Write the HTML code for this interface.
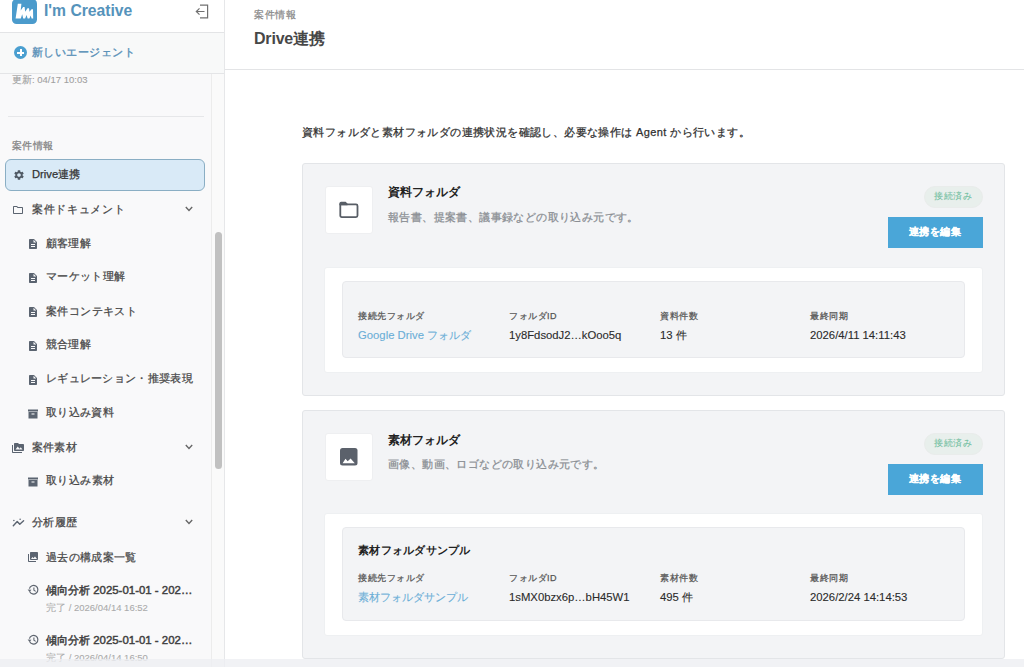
<!DOCTYPE html>
<html lang="ja">
<head>
<meta charset="utf-8">
<title>Drive連携</title>
<style>
*{box-sizing:border-box;margin:0;padding:0}
html,body{width:1024px;height:667px;overflow:hidden;background:#fff;font-family:"Liberation Sans",sans-serif;color:#333}
.ico{position:absolute;display:block}
.t{position:absolute;white-space:nowrap;line-height:1;-webkit-text-stroke:0.25px currentColor}
#side{position:absolute;left:0;top:0;width:225px;height:667px;background:#f9f9fa;border-right:1px solid #e6e7e9;overflow:hidden}
#shead{position:absolute;left:0;top:0;width:224px;height:33px;background:#fff;border-bottom:1px solid #e3e4e6}
#logo{position:absolute;left:12px;top:-1px;width:25px;height:25px;border-radius:4.5px;background:#4b9bcc;overflow:hidden}
#newag{position:absolute;left:0;top:33px;width:224px;height:41px;background:#f8f9f9;border-bottom:1px solid #e4e5e7}
#plus{position:absolute;left:14px;top:13px;width:13px;height:13px;border-radius:50%;background:#4a9fd0}
#plus:before{content:"";position:absolute;left:3px;top:5.5px;width:7px;height:2px;background:#fff}
#plus:after{content:"";position:absolute;left:5.5px;top:3px;width:2px;height:7px;background:#fff}
.div{position:absolute;left:8px;top:116px;width:196px;height:1px;background:#e6e7e9}
.active{position:absolute;left:5px;top:159px;width:200px;height:32px;border:1px solid #8aaec4;background:#d9eaf7;border-radius:6px}
.item{color:#474747;font-size:11px}
#track{position:absolute;left:211px;top:74px;width:13px;height:593px;background:#fafafa;border-left:1px solid #ececec}
#thumb{position:absolute;left:215px;top:232px;width:7px;height:237px;border-radius:4px;background:#c1c1c1}
#main{position:absolute;left:225px;top:0;width:799px;height:667px;background:#fff}
#mhead{position:absolute;left:0;top:0;width:799px;height:70px;border-bottom:1px solid #e3e4e6}
.card{position:absolute;left:302px;width:703px;background:#f3f4f6;border:1px solid #e3e5e8;border-radius:3px}
.ibox{position:absolute;left:22px;top:22px;width:48px;height:48px;background:#fff;border:1px solid #eeeff1;border-radius:3px}
.badge{position:absolute;left:621px;top:22px;width:59px;height:22px;border-radius:11px;background:#e8efec;border:1px solid #e9eceb}
.btn{position:absolute;left:585px;top:53px;width:95px;height:31px;background:#4aa6d8}
.panel{position:absolute;left:21px;width:659px;background:#fff;border:1px solid #eef0f2;border-radius:3px}
.gbox{position:absolute;left:17px;width:623px;background:#f3f4f6;border:1px solid #e8e9ec;border-radius:4px}
.lab{font-size:9px;letter-spacing:0.5px;color:#555}
.val{font-size:11.3px;color:#2a2a2a;-webkit-text-stroke:0.1px currentColor}
.link{color:#6aaed6}
#bottom{position:absolute;left:0;top:659px;width:1024px;height:8px;background:rgba(237,239,242,0.8)}
</style>
</head>
<body>
<div id="side">
<div id="shead">
<div id="logo"><svg width="25" height="25" viewBox="0 0 25 25"><path d="M3.6 19.5 L5.8 4.8 L9.4 4.8 L8.7 11.5 L11.1 8 L12.6 8 L13.2 12.8 L15.5 9.2 L17 9.2 L17.5 12.8 L19.5 10.2 L21 10.2 L21.2 19.5 L19.6 19.5 L18.7 16.5 L17.4 19.5 L15.6 19.5 L14.6 16 L13.1 19.5 L11.2 19.5 L10.2 15.2 L8.8 19.5 Z" fill="#fff"/></svg></div>
<div class="t " style="left:44px;top:3px;font-size:15.7px;font-weight:bold;color:#5593bb;-webkit-text-stroke:0">I'm Creative</div>
<svg class="ico" style="left:195px;top:4px" width="14" height="15" viewBox="0 0 14 15"><path d="M5 1.2 H12.6 V13.8 H5" fill="none" stroke="#707070" stroke-width="1.2"/><path d="M9.5 7.5 H1.5 M4.5 4.3 L1.3 7.5 L4.5 10.7" fill="none" stroke="#707070" stroke-width="1.2"/></svg>
</div>
<div id="newag"><div id="plus"></div></div>
<div class="t " style="left:32px;top:46.5px;font-size:11px;letter-spacing:0.45px;color:#5890b8;-webkit-text-stroke:0.35px currentColor">新しいエージェント</div>
<div class="t " style="left:12px;top:75px;font-size:9.5px;color:#a0a0a0;-webkit-text-stroke:0.1px currentColor">更新: 04/17 10:03</div>
<div class="div"></div>
<div class="t " style="left:12px;top:141px;font-size:10px;letter-spacing:0.3px;color:#838383">案件情報</div>
<div class="active"></div>
<svg class="ico" style="left:13px;top:169px" width="12" height="12" viewBox="0 0 24 24"><path fill="#4f5964" d="M19.14 12.94c.04-.3.06-.61.06-.94 0-.32-.02-.64-.07-.94l2.03-1.58c.18-.14.23-.41.12-.61l-1.92-3.32c-.12-.22-.37-.29-.59-.22l-2.39.96c-.5-.38-1.03-.7-1.62-.94l-.36-2.54c-.04-.24-.24-.41-.48-.41h-3.84c-.24 0-.43.17-.47.41l-.36 2.54c-.59.24-1.13.57-1.62.94l-2.39-.96c-.22-.08-.47 0-.59.22L2.74 8.87c-.12.21-.08.47.12.61l2.03 1.58c-.05.3-.09.63-.09.94s.02.64.07.94l-2.03 1.58c-.18.14-.23.41-.12.61l1.92 3.32c.12.22.37.29.59.22l2.39-.96c.5.38 1.03.7 1.62.94l.36 2.54c.05.24.24.41.48.41h3.84c.24 0 .44-.17.47-.41l.36-2.54c.59-.24 1.13-.56 1.62-.94l2.39.96c.22.08.47 0 .59-.22l1.92-3.32c.12-.22.07-.47-.12-.61l-2.01-1.58zM12 15.6c-1.98 0-3.6-1.62-3.6-3.6s1.62-3.6 3.6-3.6 3.6 1.62 3.6 3.6-1.62 3.6-3.6 3.6z"/></svg>
<div class="t " style="left:32px;top:169px;font-size:11.2px;color:#333">Drive連携</div>
<svg class="ico" style="left:12px;top:204px" width="12" height="12" viewBox="0 0 24 24"><path fill="#5b6470" d="M9.17 6l2 2H20v10H4V6h5.17M10 4H4c-1.1 0-1.99.9-1.99 2L2 18c0 1.1.9 2 2 2h16c1.1 0 2-.9 2-2V8c0-1.1-.9-2-2-2h-8l-2-2z"/></svg>
<div class="t item" style="left:32px;top:204px;letter-spacing:0.65px">案件ドキュメント</div>
<svg class="ico" style="left:185px;top:206px" width="8" height="6" viewBox="0 0 8 6"><path d="M0.8 1 L4 4.4 L7.2 1" fill="none" stroke="#666" stroke-width="1.4"/></svg>
<svg class="ico" style="left:27px;top:238px" width="12" height="12" viewBox="0 0 24 24"><path fill="#5b6470" d="M14 2H6c-1.1 0-1.99.9-1.99 2L4 20c0 1.1.89 2 1.99 2H18c1.1 0 2-.9 2-2V8l-6-6zm2 16H8v-2h8v2zm0-4H8v-2h8v2zm-3-5V3.5L18.5 9H13z"/></svg>
<div class="t item" style="left:46px;top:238px;letter-spacing:0.2px">顧客理解</div>
<svg class="ico" style="left:27px;top:272px" width="12" height="12" viewBox="0 0 24 24"><path fill="#5b6470" d="M14 2H6c-1.1 0-1.99.9-1.99 2L4 20c0 1.1.89 2 1.99 2H18c1.1 0 2-.9 2-2V8l-6-6zm2 16H8v-2h8v2zm0-4H8v-2h8v2zm-3-5V3.5L18.5 9H13z"/></svg>
<div class="t item" style="left:46px;top:271px;letter-spacing:0.35px">マーケット理解</div>
<svg class="ico" style="left:27px;top:306px" width="12" height="12" viewBox="0 0 24 24"><path fill="#5b6470" d="M14 2H6c-1.1 0-1.99.9-1.99 2L4 20c0 1.1.89 2 1.99 2H18c1.1 0 2-.9 2-2V8l-6-6zm2 16H8v-2h8v2zm0-4H8v-2h8v2zm-3-5V3.5L18.5 9H13z"/></svg>
<div class="t item" style="left:46px;top:306px;letter-spacing:0.4px">案件コンテキスト</div>
<svg class="ico" style="left:27px;top:340px" width="12" height="12" viewBox="0 0 24 24"><path fill="#5b6470" d="M14 2H6c-1.1 0-1.99.9-1.99 2L4 20c0 1.1.89 2 1.99 2H18c1.1 0 2-.9 2-2V8l-6-6zm2 16H8v-2h8v2zm0-4H8v-2h8v2zm-3-5V3.5L18.5 9H13z"/></svg>
<div class="t item" style="left:46px;top:339px;letter-spacing:0.2px">競合理解</div>
<svg class="ico" style="left:27px;top:374px" width="12" height="12" viewBox="0 0 24 24"><path fill="#5b6470" d="M14 2H6c-1.1 0-1.99.9-1.99 2L4 20c0 1.1.89 2 1.99 2H18c1.1 0 2-.9 2-2V8l-6-6zm2 16H8v-2h8v2zm0-4H8v-2h8v2zm-3-5V3.5L18.5 9H13z"/></svg>
<div class="t item" style="left:46px;top:373px;letter-spacing:0.3px">レギュレーション・推奨表現</div>
<svg class="ico" style="left:27px;top:408px" width="12" height="12" viewBox="0 0 24 24"><path fill="#5b6470" d="M2 3h20v4H2z M3 8h18v13H3z"/><path fill="#fff" d="M9 11h6v2H9z"/></svg>
<div class="t item" style="left:46px;top:407px;letter-spacing:0.35px">取り込み資料</div>
<svg class="ico" style="left:12px;top:442px" width="12" height="12" viewBox="0 0 24 24"><path fill="#5b6470" d="M2 6H0v5h.01L0 20c0 1.1.9 2 2 2h18v-2H2V6zm20-2h-8l-2-2H6c-1.1 0-1.99.9-1.990 2L4 16c0 1.1.9 2 2 2h16c1.1 0 2-.9 2-2V6c0-1.1-.9-2-2-2zM7 15l4.5-6 3.5 4.51 2.5-3.01L21 15H7z"/></svg>
<div class="t item" style="left:32px;top:442px;letter-spacing:0.2px">案件素材</div>
<svg class="ico" style="left:185px;top:444px" width="8" height="6" viewBox="0 0 8 6"><path d="M0.8 1 L4 4.4 L7.2 1" fill="none" stroke="#666" stroke-width="1.4"/></svg>
<svg class="ico" style="left:27px;top:476px" width="12" height="12" viewBox="0 0 24 24"><path fill="#5b6470" d="M2 3h20v4H2z M3 8h18v13H3z"/><path fill="#fff" d="M9 11h6v2H9z"/></svg>
<div class="t item" style="left:46px;top:475px;letter-spacing:0.4px">取り込み素材</div>
<svg class="ico" style="left:12px;top:517px" width="13" height="11" viewBox="0 0 13 11"><path d="M1.3 8.8 L5.2 4.5 L7.8 7.3 L11.6 3.8" fill="none" stroke="#5b6470" stroke-width="1.4" stroke-linecap="round" stroke-linejoin="round"/><circle cx="1.9" cy="3.4" r="0.75" fill="#5b6470"/><circle cx="8.1" cy="2.2" r="0.75" fill="#5b6470"/></svg>
<div class="t item" style="left:32px;top:517px;letter-spacing:0.35px">分析履歴</div>
<svg class="ico" style="left:185px;top:519px" width="8" height="6" viewBox="0 0 8 6"><path d="M0.8 1 L4 4.4 L7.2 1" fill="none" stroke="#666" stroke-width="1.4"/></svg>
<svg class="ico" style="left:27px;top:551px" width="12" height="12" viewBox="0 0 24 24"><path fill="#5b6470" d="M22 16V4c0-1.1-.9-2-2-2H8c-1.1 0-2 .9-2 2v12c0 1.1.9 2 2 2h12c1.1 0 2-.9 2-2zm-11-4l2.03 2.71L16 11l4 5H8l3-4zM2 6v14c0 1.1.9 2 2 2h14v-2H4V6H2z"/></svg>
<div class="t item" style="left:46px;top:552px;letter-spacing:0.35px">過去の構成案一覧</div>
<svg class="ico" style="left:27px;top:584px" width="12" height="12" viewBox="0 0 12 12"><path d="M2.6 7.4 A4.3 4.3 0 1 0 2.4 4.6" fill="none" stroke="#5f6670" stroke-width="1.2"/><path d="M0.6 5.6 L2.5 7.9 L4.5 5.8 Z" fill="#5f6670"/><path d="M6.9 3.6 V6.3 L8.7 7.4" fill="none" stroke="#5f6670" stroke-width="1.1"/></svg>
<div class="t " style="left:46px;top:585px;font-size:11.45px;font-weight:normal;color:#3f3f3f;-webkit-text-stroke:0.45px currentColor">傾向分析 2025-01-01 - 202…</div>
<div class="t " style="left:46px;top:603px;font-size:9.5px;color:#ababab;-webkit-text-stroke:0.1px currentColor">完了 / 2026/04/14 16:52</div>
<svg class="ico" style="left:27px;top:634px" width="12" height="12" viewBox="0 0 12 12"><path d="M2.6 7.4 A4.3 4.3 0 1 0 2.4 4.6" fill="none" stroke="#5f6670" stroke-width="1.2"/><path d="M0.6 5.6 L2.5 7.9 L4.5 5.8 Z" fill="#5f6670"/><path d="M6.9 3.6 V6.3 L8.7 7.4" fill="none" stroke="#5f6670" stroke-width="1.1"/></svg>
<div class="t " style="left:46px;top:635px;font-size:11.45px;font-weight:normal;color:#3f3f3f;-webkit-text-stroke:0.45px currentColor">傾向分析 2025-01-01 - 202…</div>
<div class="t " style="left:46px;top:653px;font-size:9.5px;color:#ababab;-webkit-text-stroke:0.1px currentColor">完了 / 2026/04/14 16:50</div>
<div id="track"></div>
<div id="thumb"></div>
</div>
<div id="main"><div id="mhead"></div></div>
<div class="t " style="left:254px;top:10px;font-size:10px;letter-spacing:0.5px;color:#8a8a8a">案件情報</div>
<div class="t " style="left:254px;top:31px;font-size:16px;letter-spacing:-0.2px;font-weight:bold;color:#474747;-webkit-text-stroke:0">Drive連携</div>
<div class="t " style="left:302px;top:127px;font-size:11px;letter-spacing:0.4px;color:#303030">資料フォルダと素材フォルダの連携状況を確認し、必要な操作は Agent から行います。</div>
<div class="card" style="top:163px;height:233px">
<div class="ibox"><svg class="ico" style="left:13px;top:14px" width="20" height="18" viewBox="0 0 20 18"><path d="M1.3 3.4 H17 Q18.5 3.4 18.5 4.9 V14.6 Q18.5 16.1 17 16.1 H2.8 Q1.3 16.1 1.3 14.6 Z" fill="none" stroke="#585e66" stroke-width="1.8"/><path d="M0.4 4.2 V2.5 Q0.4 0.8 2.1 0.8 H6.6 L8.5 2.6 V4.2 Z" fill="#585e66"/></svg></div>
<div class="t " style="left:85px;top:22px;font-size:12px;font-weight:bold;color:#222;-webkit-text-stroke:0">資料フォルダ</div>
<div class="t " style="left:85px;top:48px;font-size:11px;letter-spacing:0.4px;color:#8a8e93">報告書、提案書、議事録などの取り込み元です。</div>
<div class="badge"></div>
<div class="btn"></div>
<div class="t " style="left:631px;top:28px;font-size:9px;letter-spacing:0.5px;color:#74c0a2;-webkit-text-stroke:0.1px currentColor">接続済み</div>
<div class="t " style="left:606px;top:63px;font-size:10px;letter-spacing:0.4px;font-weight:bold;color:#fff;-webkit-text-stroke:0.2px currentColor">連携を編集</div>
<div class="panel" style="top:103px;height:106px">
<div class="gbox" style="top:13px;height:77px">
<div class="t lab" style="left:15px;top:30px;">接続先フォルダ</div>
<div class="t val link" style="left:15px;top:48px;">Google Drive フォルダ</div>
<div class="t lab" style="left:166px;top:30px;">フォルダID</div>
<div class="t val" style="left:166px;top:48px;">1y8FdsodJ2…kOoo5q</div>
<div class="t lab" style="left:317px;top:30px;">資料件数</div>
<div class="t val" style="left:317px;top:48px;">13 件</div>
<div class="t lab" style="left:467px;top:30px;">最終同期</div>
<div class="t val" style="left:467px;top:48px;">2026/4/11 14:11:43</div>
</div>
</div>
</div>
<div class="card" style="top:410px;height:249px">
<div class="ibox"><svg class="ico" style="left:14px;top:14px" width="18" height="18" viewBox="0 0 18 18"><rect x="0" y="0" width="17.5" height="17.5" rx="2.5" fill="#5b616b"/><path d="M2.6 15.2 L5.5 10.8 L7.7 13.2 L10.6 10.4 L14.8 15.2 Z" fill="#fff"/></svg></div>
<div class="t " style="left:85px;top:23px;font-size:12px;font-weight:bold;color:#222;-webkit-text-stroke:0">素材フォルダ</div>
<div class="t " style="left:85px;top:48px;font-size:11px;letter-spacing:0.4px;color:#8a8e93">画像、動画、ロゴなどの取り込み元です。</div>
<div class="badge"></div>
<div class="btn"></div>
<div class="t " style="left:631px;top:28px;font-size:9px;letter-spacing:0.5px;color:#74c0a2;-webkit-text-stroke:0.1px currentColor">接続済み</div>
<div class="t " style="left:606px;top:63px;font-size:10px;letter-spacing:0.4px;font-weight:bold;color:#fff;-webkit-text-stroke:0.2px currentColor">連携を編集</div>
<div class="panel" style="top:102px;height:123px">
<div class="gbox" style="top:13px;height:94px">
<div class="t " style="left:15px;top:17px;font-size:11px;letter-spacing:0.25px;font-weight:bold;color:#222;-webkit-text-stroke:0">素材フォルダサンプル</div>
<div class="t lab" style="left:15px;top:46px;">接続先フォルダ</div>
<div class="t val link" style="left:15px;top:64px;">素材フォルダサンプル</div>
<div class="t lab" style="left:166px;top:46px;">フォルダID</div>
<div class="t val" style="left:166px;top:64px;">1sMX0bzx6p…bH45W1</div>
<div class="t lab" style="left:317px;top:46px;">素材件数</div>
<div class="t val" style="left:317px;top:64px;">495 件</div>
<div class="t lab" style="left:467px;top:46px;">最終同期</div>
<div class="t val" style="left:467px;top:64px;">2026/2/24 14:14:53</div>
</div>
</div>
</div>
<div id="bottom"></div>
</body>
</html>
